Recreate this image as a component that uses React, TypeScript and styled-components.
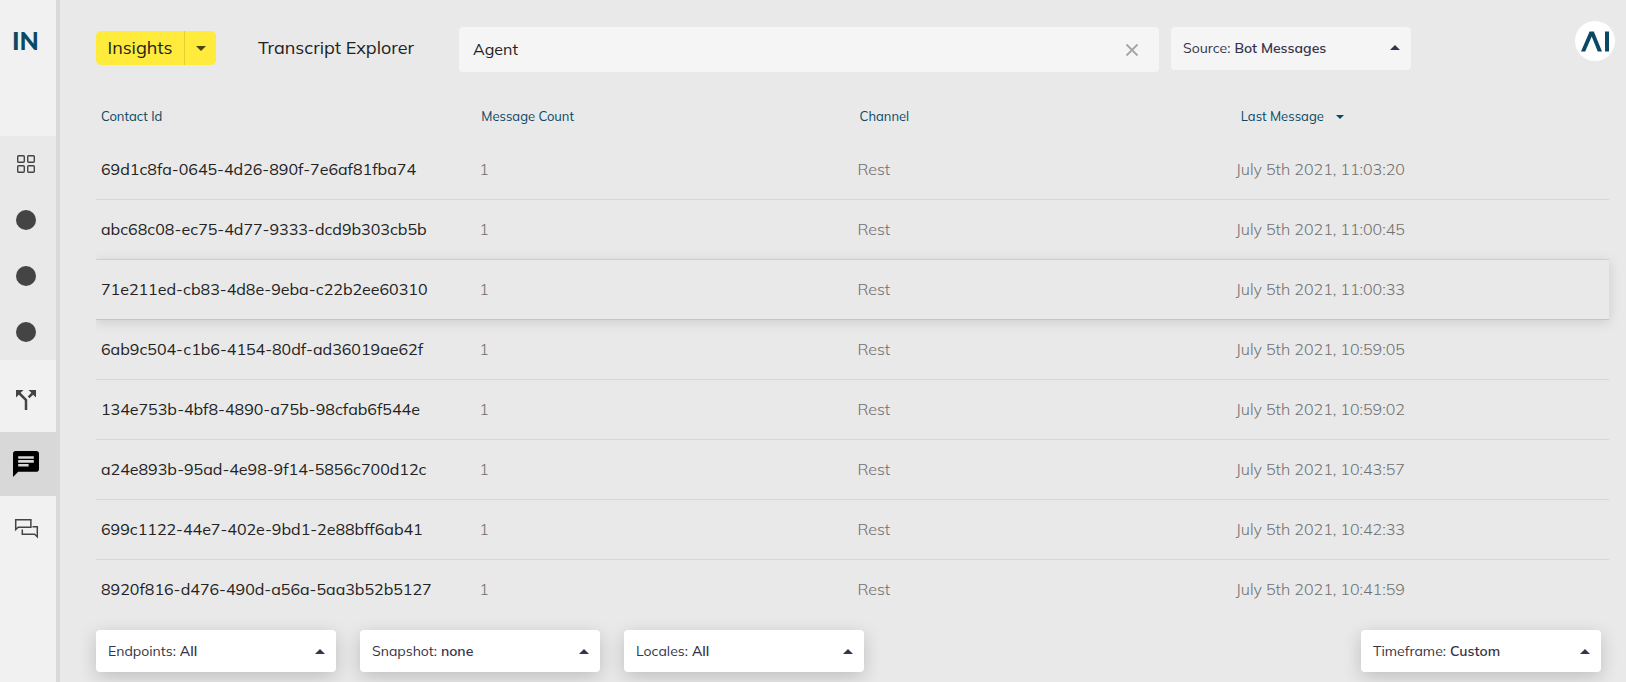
import React from 'react';
import styled, { createGlobalStyle, css } from 'styled-components';

const GlobalStyle = createGlobalStyle`
  *, *::before, *::after { box-sizing: border-box; }
  body {
    margin: 0;
    background: #e9e9e9;
    color: #222;
    font-family: Muli, Mulish, 'Noto Sans', sans-serif;
    font-size: 16px;
  }
  button, input, select { font: inherit; color: inherit; }
`;

const Page = styled.div`
  display: flex;
  min-height: 100vh;
`;

const Sidebar = styled.nav`
  flex: none;
  width: 60px;
  display: flex;
  flex-direction: column;
  background: #f1f1f1;
  border-right: 4px solid #d9d9d9;
`;

const Brand = styled.a`
  height: 136px;
  padding: 23px 0 0 12px;
  color: #0b4864;
  font-family: Lato, sans-serif;
  font-size: 25px;
  font-weight: 900;
  line-height: 34px;
  text-decoration: none;
`;

const NavGroup = styled.div`
  display: flex;
  flex-direction: column;
  background: #e9e9e9;
`;

const NavButton = styled.button<{ $tall?: boolean; $compact?: boolean; $active?: boolean }>`
  display: flex;
  align-items: center;
  height: ${p => (p.$tall ? 72 : p.$compact ? 56 : 64)}px;
  padding: ${p => (p.$tall ? 8 : 0)}px 0 0 13px;
  border: 0;
  background: ${p => (p.$active ? '#d8d8d8' : 'transparent')};
  color: ${p => (p.$active ? '#000' : '#444')};
  svg { display: block; }
`;

const Main = styled.main`
  flex: 1;
  min-width: 0;
  display: flex;
  flex-direction: column;
  padding-left: 36px;
`;

const TopBar = styled.header`
  display: flex;
  align-items: flex-start;
  padding: 21px 11px 0 0;
`;

const SplitButton = styled.div`
  flex: none;
  display: flex;
  width: 120px;
  height: 34px;
  margin-top: 10px;
  border-radius: 5px;
  overflow: hidden;
  background: #ffeb3b;
`;

const SplitMain = styled.button`
  flex: 1;
  padding: 0;
  border: 0;
  border-right: 1px solid #e3cf33;
  background: none;
  font-size: 18px;
  line-height: 34px;
`;

const SplitToggle = styled.button`
  display: flex;
  align-items: center;
  justify-content: center;
  width: 31px;
  padding: 0;
  border: 0;
  background: none;
  color: #4a4415;
`;

const Title = styled.h1`
  flex: none;
  width: 201px;
  margin: 10px 0 0 42px;
  font-size: 18px;
  font-weight: 400;
  line-height: 34px;
  white-space: nowrap;
`;

const SearchBox = styled.div`
  flex: 0 1 700px;
  display: flex;
  align-items: center;
  height: 45px;
  margin-top: 6px;
  padding: 0 18px 0 14px;
  border-radius: 4px;
  background: #f5f5f5;
`;

const SearchInput = styled.input`
  flex: 1;
  min-width: 0;
  padding: 0 0 2px;
  border: 0;
  outline: 0;
  background: none;
`;

const ClearButton = styled.button`
  display: flex;
  padding: 0;
  border: 0;
  background: none;
  color: #a3a6aa;
`;

const SelectCard = styled.div<{ $raised?: boolean }>`
  flex: none;
  position: relative;
  display: flex;
  align-items: center;
  gap: 4px;
  width: 240px;
  height: 43px;
  padding: 0 0 2px 12px;
  border-radius: 4px;
  background: #f5f5f5;
  color: #35344a;
  font-size: 14px;
  ${p => p.$raised && css`
    height: 42px;
    padding-bottom: 0;
    background: #fff;
    box-shadow: 0 5px 18px rgba(0, 0, 0, 0.18);
  `}
  > svg {
    position: absolute;
    right: 11px;
    pointer-events: none;
  }
`;

const Select = styled.select`
  flex: 1;
  min-width: 0;
  height: 100%;
  padding: 0 32px 0 0;
  border: 0;
  outline: 0;
  appearance: none;
  background: none;
  font-weight: 600;
`;

const SourceSlot = styled.div`
  flex: none;
  margin: 6px 0 0 12px;
`;

const Avatar = styled.button`
  flex: none;
  width: 40px;
  height: 40px;
  margin-left: auto;
  padding: 0;
  border: 0;
  border-radius: 50%;
  background: #fff;
  color: #0b4864;
  svg { display: block; }
`;

const Results = styled.section`
  padding: 20px 17px 0 0;
  clip-path: inset(0);
`;

const Table = styled.table`
  width: 100%;
  table-layout: fixed;
  border-collapse: separate;
  border-spacing: 0;
`;

const HeadCell = styled.th`
  height: 48px;
  padding: 0 0 0 7px;
  color: #0b4864;
  font-size: 13px;
  font-weight: 400;
  text-align: left;
  &:first-child { padding-left: 5px; }
  &:last-child { padding-left: 10px; }
  svg { margin: 0 0 2px 9px; vertical-align: middle; }
`;

const Row = styled.tr<{ $raised?: boolean }>`
  ${p => p.$raised && css`box-shadow: 0 2px 12px rgba(0, 0, 0, 0.13);`}
  &:last-child td { border-bottom: 0; }
`;

const Cell = styled.td<{ $raised?: boolean }>`
  height: 60px;
  padding: 0 0 2px 5px;
  border-bottom: 1px solid ${p => (p.$raised ? '#c6c6c6' : '#d6d6d6')};
  color: #707070;
  font-weight: 300;
  white-space: nowrap;
  &:first-child { color: #222; font-weight: 400; }
`;

const Filters = styled.footer`
  display: flex;
  gap: 24px;
  padding: 10px 25px 10px 0;
  > :last-child { margin-left: auto; }
`;

const CaretUp = () => (
  <svg width="10" height="5" viewBox="0 0 10 5" aria-hidden="true">
    <path d="M0 5 L5 0 L10 5Z" fill="currentColor" />
  </svg>
);

const CaretDown = ({ size = 10 }: { size?: number }) => (
  <svg width={size} height={size / 2} viewBox="0 0 10 5" aria-hidden="true">
    <path d="M0 0 L5 5 L10 0Z" fill="currentColor" />
  </svg>
);

const DotIcon = () => (
  <svg width="26" height="26" aria-hidden="true">
    <circle cx="13" cy="13" r="10" fill="currentColor" />
  </svg>
);

const GridIcon = () => (
  <svg width="26" height="26" fill="none" stroke="currentColor" strokeWidth="1.4" aria-hidden="true">
    {[4.7, 14.7].map(x => [4.7, 14.7].map(y => (
      <rect key={`${x}-${y}`} x={x} y={y} width="6.6" height="6.6" rx="1" />
    )))}
  </svg>
);

const SplitIcon = () => (
  <svg width="26" height="26" viewBox="1.6 1.6 20.8 20.8" aria-hidden="true">
    <path fill="currentColor" d="M14 4l2.29 2.29-2.88 2.88 1.42 1.42 2.88-2.88L20 10V4zm-4 0H4v6l2.29-2.29 4.71 4.7V20h2v-8.41l-5.29-5.3z" />
  </svg>
);

const ChatIcon = () => (
  <svg width="26" height="26" viewBox="2 2 20 20" aria-hidden="true">
    <path fill="currentColor" d="M20 2H4c-1.1 0-1.99.9-1.99 2L2 22l4-4h14c1.1 0 2-.9 2-2V4c0-1.1-.9-2-2-2zM6 9h12v2H6V9zm8 5H6v-2h8v2zm4-6H6V6h12v2z" />
  </svg>
);

const ChatsIcon = () => (
  <svg width="26" height="26" fill="none" stroke="currentColor" strokeWidth="1.5" aria-hidden="true">
    <path d="M2.7 4.7H17.9V12.3H5.2L2.7 14.6Z" />
    <path d="M19.5 11.7H24.3V21.8L21.6 19.3H9.3V14.4" />
  </svg>
);

const LogoMark = () => (
  <svg width="40" height="40" aria-hidden="true">
    <path d="M6 30.5 L14.6 10.5 H18.8 L27 30.5 H22.8 L16.7 15.5 L10.2 30.5Z" fill="currentColor" />
    <path d="M30 10.5 H34 V30.5 H30Z" fill="currentColor" />
  </svg>
);

type FilterProps = { id: string; label: string; value: string; raised?: boolean };

const FilterSelect = ({ id, label, value, raised }: FilterProps) => (
  <SelectCard $raised={raised}>
    <label htmlFor={id}>{label}:</label>
    <Select id={id} defaultValue={value}>
      <option>{value}</option>
    </Select>
    <CaretUp />
  </SelectCard>
);

const contacts = [
  ['69d1c8fa-0645-4d26-890f-7e6af81fba74', '11:03:20'],
  ['abc68c08-ec75-4d77-9333-dcd9b303cb5b', '11:00:45'],
  ['71e211ed-cb83-4d8e-9eba-c22b2ee60310', '11:00:33'],
  ['6ab9c504-c1b6-4154-80df-ad36019ae62f', '10:59:05'],
  ['134e753b-4bf8-4890-a75b-98cfab6f544e', '10:59:02'],
  ['a24e893b-95ad-4e98-9f14-5856c700d12c', '10:43:57'],
  ['699c1122-44e7-402e-9bd1-2e88bff6ab41', '10:42:33'],
  ['8920f816-d476-490d-a56a-5aa3b52b5127', '10:41:59'],
];

export default function App() {
  return (
    <>
      <GlobalStyle />
      <Page>
        <Sidebar>
          <Brand href="#">IN</Brand>
          <NavGroup>
            <NavButton $compact aria-label="Dashboard"><GridIcon /></NavButton>
            <NavButton $compact aria-label="Engagement"><DotIcon /></NavButton>
            <NavButton $compact aria-label="Performance"><DotIcon /></NavButton>
            <NavButton $compact aria-label="Understanding"><DotIcon /></NavButton>
          </NavGroup>
          <NavButton $tall aria-label="Step explorer"><SplitIcon /></NavButton>
          <NavButton $active aria-label="Transcript explorer"><ChatIcon /></NavButton>
          <NavButton aria-label="Message explorer"><ChatsIcon /></NavButton>
        </Sidebar>
        <Main>
          <TopBar>
            <SplitButton>
              <SplitMain>Insights</SplitMain>
              <SplitToggle aria-label="Switch product"><CaretDown /></SplitToggle>
            </SplitButton>
            <Title>Transcript Explorer</Title>
            <SearchBox>
              <SearchInput type="text" aria-label="Search transcripts" defaultValue="Agent" />
              <ClearButton aria-label="Clear search">
                <svg width="18" height="18" fill="none" stroke="currentColor" strokeWidth="1.8" aria-hidden="true">
                  <path d="M3.5 3.5 L14.5 14.5 M14.5 3.5 L3.5 14.5" />
                </svg>
              </ClearButton>
            </SearchBox>
            <SourceSlot>
              <FilterSelect id="source" label="Source" value="Bot Messages" />
            </SourceSlot>
            <Avatar aria-label="Account"><LogoMark /></Avatar>
          </TopBar>
          <Results>
            <Table>
              <thead>
                <tr>
                  <HeadCell scope="col">Contact Id</HeadCell>
                  <HeadCell scope="col">Message Count</HeadCell>
                  <HeadCell scope="col">Channel</HeadCell>
                  <HeadCell scope="col" aria-sort="descending">Last Message <CaretDown size={8} /></HeadCell>
                </tr>
              </thead>
              <tbody>
                {contacts.map(([id, time], i) => (
                  <Row key={id} $raised={i === 2}>
                    <Cell $raised={i === 2}>{id}</Cell>
                    <Cell $raised={i === 2}>1</Cell>
                    <Cell $raised={i === 2}>Rest</Cell>
                    <Cell $raised={i === 2}>July 5th 2021, {time}</Cell>
                  </Row>
                ))}
              </tbody>
            </Table>
          </Results>
          <Filters>
            <FilterSelect id="endpoints" label="Endpoints" value="All" raised />
            <FilterSelect id="snapshot" label="Snapshot" value="none" raised />
            <FilterSelect id="locales" label="Locales" value="All" raised />
            <FilterSelect id="timeframe" label="Timeframe" value="Custom" raised />
          </Filters>
        </Main>
      </Page>
    </>
  );
}
